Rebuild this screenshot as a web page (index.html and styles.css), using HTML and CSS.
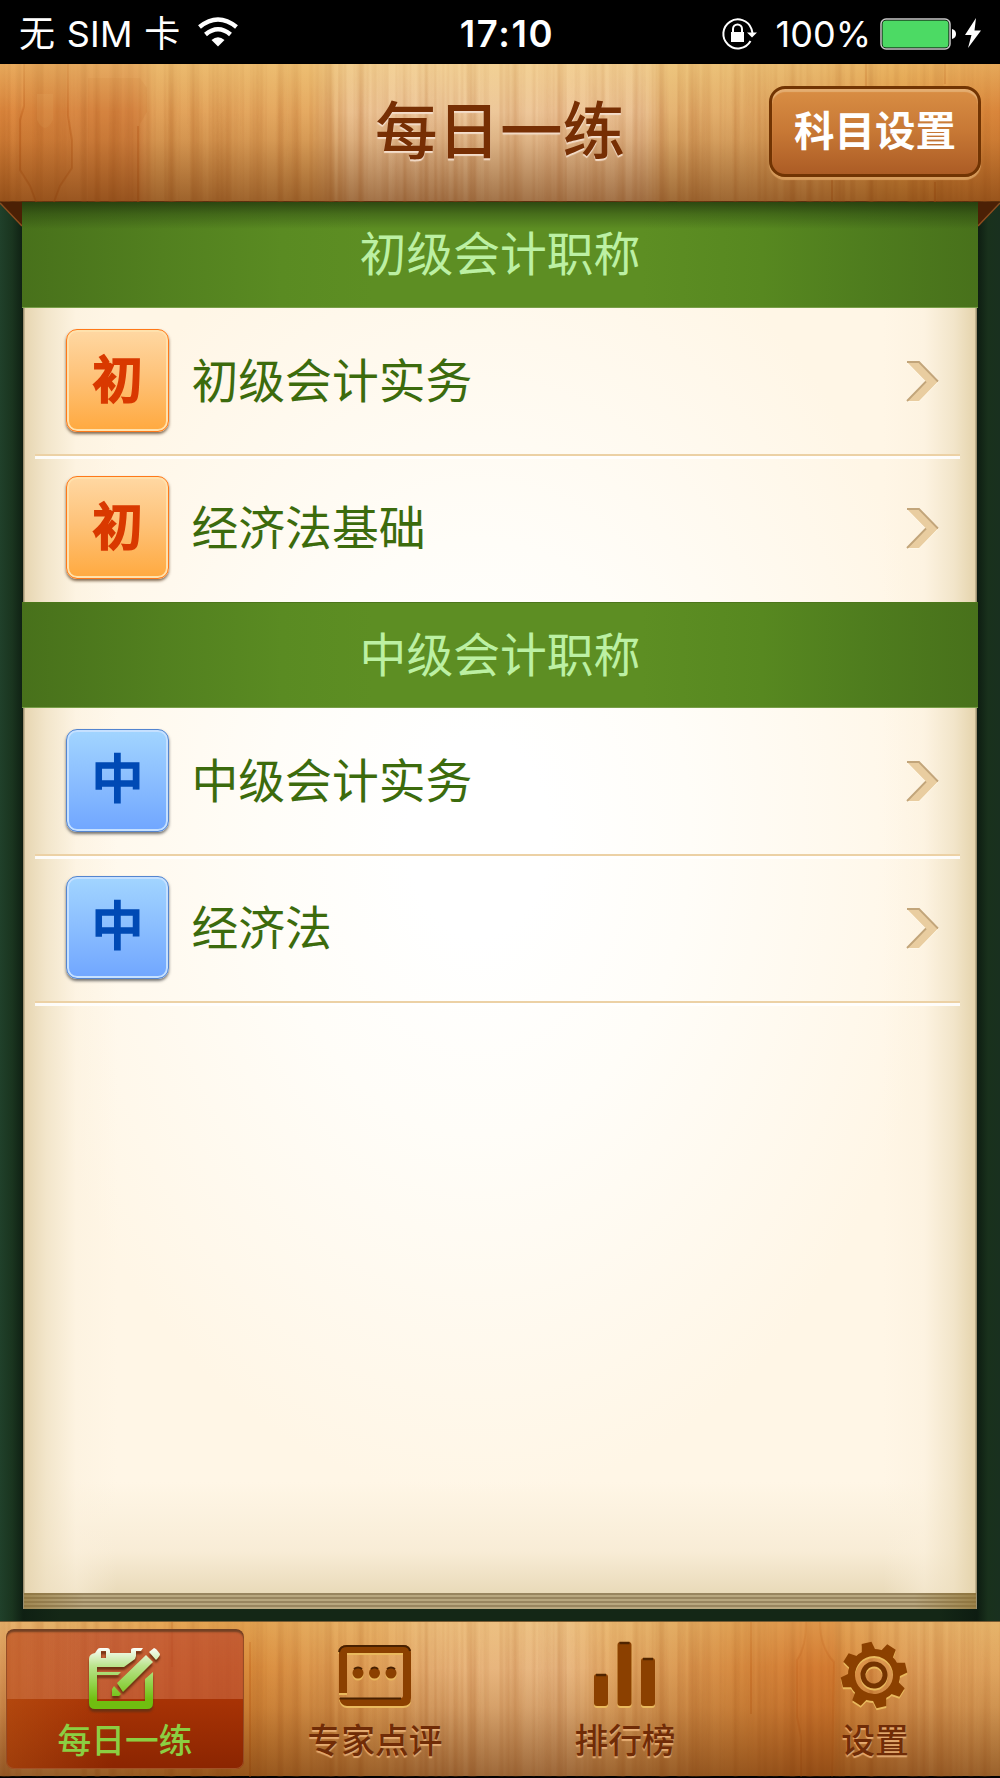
FILE: index.html
```html
<!DOCTYPE html>
<html lang="zh-CN">
<head>
<meta charset="utf-8">
<title>每日一练</title>
<link rel="stylesheet" href="styles.css">
</head>
<body>
<div class="app">
  <div class="status">
    <div class="status-left"><span>无 SIM 卡</span>
      <svg width="40" height="30" viewBox="0 0 40 30"><path d="M1.500 9Q20-6 38.500 9" fill="none" stroke="#fff" stroke-width="4.500"/><path d="M7.500 16.500Q20 6 32.500 16.500" fill="none" stroke="#fff" stroke-width="4.500"/><path d="M13.500 22Q20 16.500 26.500 22L20 28.500Z" fill="#fff"/></svg>
    </div>
    <div class="clock">17:10</div>
    <div class="status-right">
      <svg class="lock" width="37" height="34" viewBox="0 0 37 34"><path d="M29.500 24A14.500 14.500 0 1 1 30.500 12L31.500 16" fill="none" stroke="#fff" stroke-width="2"/><path d="M26 15.500H36L31 20.500Z" fill="#fff"/><rect x="10" y="15" width="13" height="10" fill="#fff"/><path d="M12 16V12a4.500 4.500 0 0 1 9 0V16" fill="none" stroke="#fff" stroke-width="2"/></svg>
      <span>100%</span>
      <svg class="battery" width="77" height="32" viewBox="0 0 77 32"><rect x="1" y="1" width="69" height="30" rx="5" fill="#000" stroke="#c8c8c8" stroke-width="1.500"/><rect x="2.500" y="2.500" width="66" height="27" rx="3.500" fill="#4cda64"/><path d="M72 11Q76 12 76 16T72 21Z" fill="#fff"/></svg>
      <svg class="bolt" width="16" height="30" viewBox="0 0 16 30"><path d="M11 0L0 17H6.500L3 30L16 12.500H9.500Z" fill="#fff"/></svg>
    </div>
  </div>

  <header class="header wood">
    <svg class="grain" width="1000" height="138" viewBox="0 0 1000 138">
      <filter id="grain" x="0" y="0" width="100%" height="100%" color-interpolation-filters="sRGB"><feTurbulence type="fractalNoise" baseFrequency="0.09 0.001" numOctaves="3" seed="8"/><feColorMatrix values="0 0 0 0 .66  0 0 0 0 .34  0 0 0 0 .1  1.500 0 0 0 -.62"/></filter>
      <rect width="1000" height="138" filter="url(#grain)" opacity=".6"/>
      <g fill="#b85a1a" fill-opacity=".13"><path d="M24 0H68V52L72 76V104L60 122L54 138H36L30 122L20 106V56L24 42Z"/><path d="M88 14H140L147 24V48L140 60V138H88Z"/></g>
      <path d="M37 30H53V56Q45 72 37 56Z" fill="#e09a55" fill-opacity=".25"/>
      <g fill="none" stroke="#b4500e" stroke-opacity=".3" stroke-width="2"><path d="M24 0V42L20 56V106L30 122L36 138M68 0V52L72 76V104L60 122L54 138M138 62V138M866 0V30M945 0V20M832 112V138M935 118V138"/></g>
    </svg>
    <h1 class="title">每日一练</h1>
    <button class="subject">科目设置</button>
  </header>

  <main class="desk">
    <svg class="fold fold-left" width="22" height="26" viewBox="0 0 22 26"><path d="M0 0H22V24Z" fill="#4b2005"/><path d="M0 1L22 24" stroke="#8e4d1e" stroke-width="1.500"/></svg>
    <svg class="fold fold-right" width="22" height="26" viewBox="0 0 22 26"><path d="M22 0H0V24Z" fill="#4b2005"/><path d="M22 1L0 24" stroke="#8e4d1e" stroke-width="1.500"/></svg>
    <div class="paper">
      <h2 class="section">初级会计职称</h2>
      <div class="row"><span class="badge orange">初</span><span class="name">初级会计实务</span><svg class="chev" width="32" height="41" viewBox="0 0 32 41"><path d="M0 1H12L31 20.500L12 40H0L19 20.500Z" fill="#e9cda0"/><path d="M0 1H12L31 20.500M0 40L19 20.500" fill="none" stroke="#c2a57a" stroke-width="1.800"/></svg></div>
      <div class="row plain"><span class="badge orange">初</span><span class="name">经济法基础</span><svg class="chev" width="32" height="41" viewBox="0 0 32 41"><path d="M0 1H12L31 20.500L12 40H0L19 20.500Z" fill="#e9cda0"/><path d="M0 1H12L31 20.500M0 40L19 20.500" fill="none" stroke="#c2a57a" stroke-width="1.800"/></svg></div>
      <h2 class="section">中级会计职称</h2>
      <div class="row"><span class="badge blue">中</span><span class="name">中级会计实务</span><svg class="chev" width="32" height="41" viewBox="0 0 32 41"><path d="M0 1H12L31 20.500L12 40H0L19 20.500Z" fill="#e9cda0"/><path d="M0 1H12L31 20.500M0 40L19 20.500" fill="none" stroke="#c2a57a" stroke-width="1.800"/></svg></div>
      <div class="row"><span class="badge blue">中</span><span class="name">经济法</span><svg class="chev" width="32" height="41" viewBox="0 0 32 41"><path d="M0 1H12L31 20.500L12 40H0L19 20.500Z" fill="#e9cda0"/><path d="M0 1H12L31 20.500M0 40L19 20.500" fill="none" stroke="#c2a57a" stroke-width="1.800"/></svg></div>
      <div class="blank"></div>
      <div class="pages"></div>
    </div>
  </main>

  <nav class="tabs wood">
    <svg class="grain" width="1000" height="155" viewBox="0 0 1000 155">
      <rect width="1000" height="155" filter="url(#grain)" opacity=".6"/>
      <g fill="#c05a14" fill-opacity=".1"><path d="M806 0H820Q820 25 834 40L832 100L830 155H801V115L797 95V38Q806 25 806 0Z"/></g>
      <path d="M751 0V92M250 20V155M172 0V45" stroke="#bd5d14" stroke-opacity=".35" stroke-width="2"/>
      <path d="M806 0Q806 25 797 38V95L801 115V155M820 0Q820 25 834 40L832 155" fill="none" stroke="#b4500e" stroke-opacity=".22" stroke-width="2"/>
    </svg>
    <a class="tab active">
      <svg class="icon" width="76" height="68" viewBox="0 0 76 68">
        <defs><linearGradient id="green" gradientUnits="userSpaceOnUse" x1="0" y1="2" x2="0" y2="64"><stop offset="0" stop-color="#fff"/><stop offset=".3" stop-color="#bce48f"/><stop offset=".6" stop-color="#91d248"/><stop offset=".85" stop-color="#70be10"/></linearGradient></defs>
        <g fill="url(#green)"><path fill-rule="evenodd" d="M3 14Q3 9 9 8L11 5Q12 3 14 3H21Q24 3 24 6V8H45V5Q45 3 48 3H57L55 6H50V11L49 14L38 22H11V27H35L32 30H11V56H59V34L67 27V58Q67 64 61 64H9Q3 64 3 58ZM15 6V13H20V6Z"/><path d="M31 38L60 10L67 17L37 47ZM28 41L35 49L33 51H26V44ZM63 7L68 3Q70 3 74 9Q74 11 70 15Z"/></g>
      </svg>
      <span>每日一练</span></a>
    <a class="tab">
      <svg class="icon" width="76" height="68" viewBox="0 0 76 68"><g fill="#8b4000"><path d="M3 50V10Q3 2 11 2H67Q75 2 75 10V55Q75 63 67 63H11Q5 63 3 55H65Q67 55 67 53V10H11V50Z"/><circle cx="22" cy="30" r="5.500"/><circle cx="38.500" cy="30" r="5.500"/><circle cx="55" cy="30" r="5.500"/></g><path d="M3 9Q4 3 11 3H67Q73 3 74 8M4 55.500H65M18 26Q22 23 26 26M35 26Q38.500 23 42 26M51 26Q55 23 59 26" fill="none" stroke="#482000" stroke-width="2"/></svg>
      <span>专家点评</span></a>
    <a class="tab">
      <svg class="icon" width="76" height="68" viewBox="0 0 76 68"><g fill="#8b4000"><rect x="8" y="31" width="14" height="32" rx="3"/><rect x="31.500" y="-1" width="14" height="64" rx="3"/><rect x="55" y="15" width="14" height="48" rx="3"/></g><path d="M10 32H20M33.500 0H43.500M57 16H67" stroke="#4f2400" stroke-width="2.500"/></svg>
      <span>排行榜</span></a>
    <a class="tab">
      <svg class="icon" width="76" height="68" viewBox="0 0 76 68"><g transform="translate(38 32) rotate(-13)"><g fill="#8b4000"><path id="tooth" d="M-7-24L-5-33H5L7-24Z"/><use href="#tooth" transform="rotate(45)"/><use href="#tooth" transform="rotate(90)"/><use href="#tooth" transform="rotate(135)"/><use href="#tooth" transform="rotate(180)"/><use href="#tooth" transform="rotate(225)"/><use href="#tooth" transform="rotate(270)"/><use href="#tooth" transform="rotate(315)"/></g><circle r="22.500" fill="none" stroke="#8b4000" stroke-width="7"/><circle r="11" fill="none" stroke="#743300" stroke-width="5"/></g></svg>
      <span>设置</span></a>
  </nav>
</div>
</body>
</html>
```
FILE: styles.css
```css
* { box-sizing: border-box; }
body { margin: 0; background: #000; font-family: Inter, "Noto Sans CJK SC", sans-serif; }
svg { display: block; overflow: visible; flex: none; }
.app { width: 1000px; height: 1778px; display: flex; flex-direction: column; overflow: hidden; padding-bottom: 2px; }

.status { height: 64px; flex: none; display: grid; grid-template-columns: 1fr auto 1fr; align-items: center; padding: 4px 19px 0 19px; color: #fff; font-size: 36px; line-height: 60px; }
.status-left { display: flex; align-items: center; gap: 18px; white-space: pre; font-weight: 400; }
.status-left span { font-size: 36px; letter-spacing: .2px; word-spacing: 1.2px; }
.status-left svg { margin-top: -2px; }
.clock { font-weight: 600; font-size: 36.5px; letter-spacing: 1.6px; padding-left: 14px; }
.status-right { display: flex; align-items: center; justify-content: flex-end; font-weight: 400; }
.status-right span { font-size: 36px; width: 93px; white-space: nowrap; display: flex; justify-content: flex-end; }
.status-right .lock { margin-right: 20px; }
.status-right .battery { margin-left: 9px; }
.status-right .bolt { margin-left: 8px; margin-top: -3px; }

.wood { position: relative; flex: none; }
.grain { position: absolute; inset: 0; z-index: 0; }
.header { height: 138px; display: grid; grid-template-columns: 1fr auto 1fr; align-items: center; padding: 0 19px; z-index: 2;
  background: linear-gradient(90deg, #df8a40 0, #d98843 60px, #d98a48 135px, #e2a25a 155px, #e5aa62 310px, #e7b578 330px, #ebc08e 348px, #efc99e 400px, #edc799 500px, #efc79a 560px, #ebc294 640px, #e5b473 670px, #dfa45e 800px, #df9846 900px, #d9853a 1000px);
  border-bottom: 1px solid #5b2f0d; }
.header::after, .tabs::after { content: ""; position: absolute; inset: 0; background: linear-gradient(rgba(250,224,140,.38), rgba(240,190,110,0) 35%, rgba(120,55,5,.13) 55%, rgba(95,40,0,.52)); }
.tabs::after { background: linear-gradient(rgba(250,224,140,.25), rgba(240,190,110,0) 30%, rgba(120,55,5,.16) 55%, rgba(95,40,0,.54)); }
.title { grid-column: 2; margin: 0; position: relative; z-index: 1; color: #772f04; font-size: 62.5px; line-height: 90px; font-weight: 500; padding-bottom: 3px; text-shadow: 0 2px 1px #f4ddca; }
.subject { justify-self: end; position: relative; z-index: 1; width: 212px; height: 91px; margin: 0 0 2px; padding: 0 0 5px; border: 3px solid #713403; border-radius: 16px; background: linear-gradient(#d98e44, #c77835 50%, #ac5c25); box-shadow: inset 0 3px 1px #e4ad71, 0 3px 1px #d69b5b; font: 700 40.5px/1 "Noto Sans CJK SC", sans-serif; color: #fff; }

.desk { position: relative; flex: 1; padding: 0 22px; background: linear-gradient(90deg, #20402a, #1a351f 12px, #0f2013 23px, #142716 60px, #142716 940px, #0d1c11 977px, #19311c 988px, #19301f); }
.fold { position: absolute; top: 0; }
.fold-left { left: 0; }
.fold-right { right: 0; }
.paper { position: relative; height: 1407px; display: flex; flex-direction: column; padding: 0 2px; background: linear-gradient(90deg, #0d1c11 1px, #9c9070 1px, #9c9070 2px, #e7d6b2 3px, rgba(239,225,195,.8) 24px, rgba(251,240,220,.5) 54px, rgba(255,246,230,0) 95px, rgba(255,246,230,0) 861px, rgba(251,240,220,.5) 902px, rgba(239,225,195,.8) 932px, #e5d4ad 953px, #9c9070 954px, #9c9070 955px, #0d1c11 955px), linear-gradient(transparent 1280px, rgba(245,232,207,.7) 1350px, #e9dab9 1391px), radial-gradient(ellipse 470px 660px at 456px 635px, #fff 15%, #fffdf8 45%, #fff6e6 100%); }
.section { position: relative; margin: 0 -2px; height: 106px; flex: none; display: flex; align-items: center; justify-content: center; background: linear-gradient(90deg, #48711b, #52801f 140px, #5a8b22 260px, #5d8e23 350px, #5d8e23 620px, #578820 740px, #4f7d1e 840px, #48711b); border-bottom: 1px solid #789e48; color: #bcf0a3; font-size: 46.8px; font-weight: 400; line-height: 1; }
.section:first-child { background: linear-gradient(rgba(20,36,8,.65), rgba(20,36,8,.3) 12px, rgba(20,36,8,0) 27px), linear-gradient(90deg, #48711b, #52801f 140px, #5a8b22 260px, #5d8e23 350px, #5d8e23 620px, #578820 740px, #4f7d1e 840px, #48711b); }
.section:not(:first-child) { border-top: 1px solid #4c761b; }
.row { position: relative; height: 147px; flex: none; display: flex; align-items: center; padding: 0 37px 0 41.5px; }
.row:not(.plain)::after { content: ""; position: absolute; left: 11px; right: 16px; bottom: -4px; height: 5px; background: linear-gradient(#ecd1a5 0 2px, rgba(255,255,255,.85) 2px); }
.name { margin-left: 23px; color: #3c6b0d; font-size: 46.8px; line-height: 60px; flex: 1; font-weight: 400; padding-bottom: 2px; }
.badge { width: 103px; height: 103px; margin-bottom: 3px; border-radius: 11px; display: grid; place-items: center; font-size: 50px; line-height: 1; font-weight: 500; padding: 0 0 1px 1px; -webkit-text-stroke: 2.2px currentColor; }
.orange { color: #d93900; background: linear-gradient(#ffd8a3, #fec37a 45%, #ffa93f); border: 1.5px solid #ff7919; box-shadow: inset 0 0 0 2px #ffe1ac, 0 2px 3px rgba(80,50,20,.7); }
.blue { color: #004ab5; font-size: 52px; -webkit-text-stroke-width: 1.6px; background: linear-gradient(#a2d5ff, #8dc0ff 45%, #70a6ff); border: 1.5px solid #5485d0; box-shadow: inset 0 0 0 2px #c5e0ff, 0 2px 3px rgba(60,60,60,.7); }
.chev { margin-bottom: 1px; filter: drop-shadow(0 1.5px 0 #fff8e8); }
.blank { flex: 1; }
.pages { height: 16px; flex: none; background: linear-gradient(90deg, rgba(139,109,44,.55), transparent 60px, transparent 890px, rgba(139,109,44,.65)), repeating-linear-gradient(#98855f 0 2px, #b8a77f 2px 4px); }

.tabs { height: 155px; display: grid; grid-template-columns: repeat(4, 1fr); border-top: 1px solid #765a32;
  background: linear-gradient(90deg, #dfa061, #dda05b 60px, #df9343 170px, #d98b3b 245px, #de9b51 320px, #e2a35c 380px, #e7b277 430px, #e9b984 560px, #e5ac6a 610px, #dda05b 660px, #d68a40 740px, #d68037 800px, #d68036 833px, #da8c40 840px, #dfa05c 920px, #e0a55f); }
.tab { position: relative; z-index: 1; display: flex; flex-direction: column; align-items: center; margin: 7px 6px 7px; padding-top: 14px; border-radius: 8px; color: #702c07; font-size: 33.7px; line-height: 40px; font-weight: 500; text-shadow: 0 2px 1px rgba(242,186,129,.8); }
.tab .icon { margin: 0 0 10px -2px; filter: drop-shadow(0 2px 0 #e9b95d); }
.tab.active { color: #8bcf42; text-shadow: none; background: linear-gradient(90deg, rgba(200,110,30,.35), transparent 45%), linear-gradient(rgba(184,66,40,.67) 0 50%, #a83305 50%, #8b2501); box-shadow: inset 0 3px 2px #714023, inset 0 0 0 1px #a35126; }
.tab.active .icon { margin: 2px 0 8px -3px; filter: drop-shadow(0 3px 1px #6d3011); }
```
